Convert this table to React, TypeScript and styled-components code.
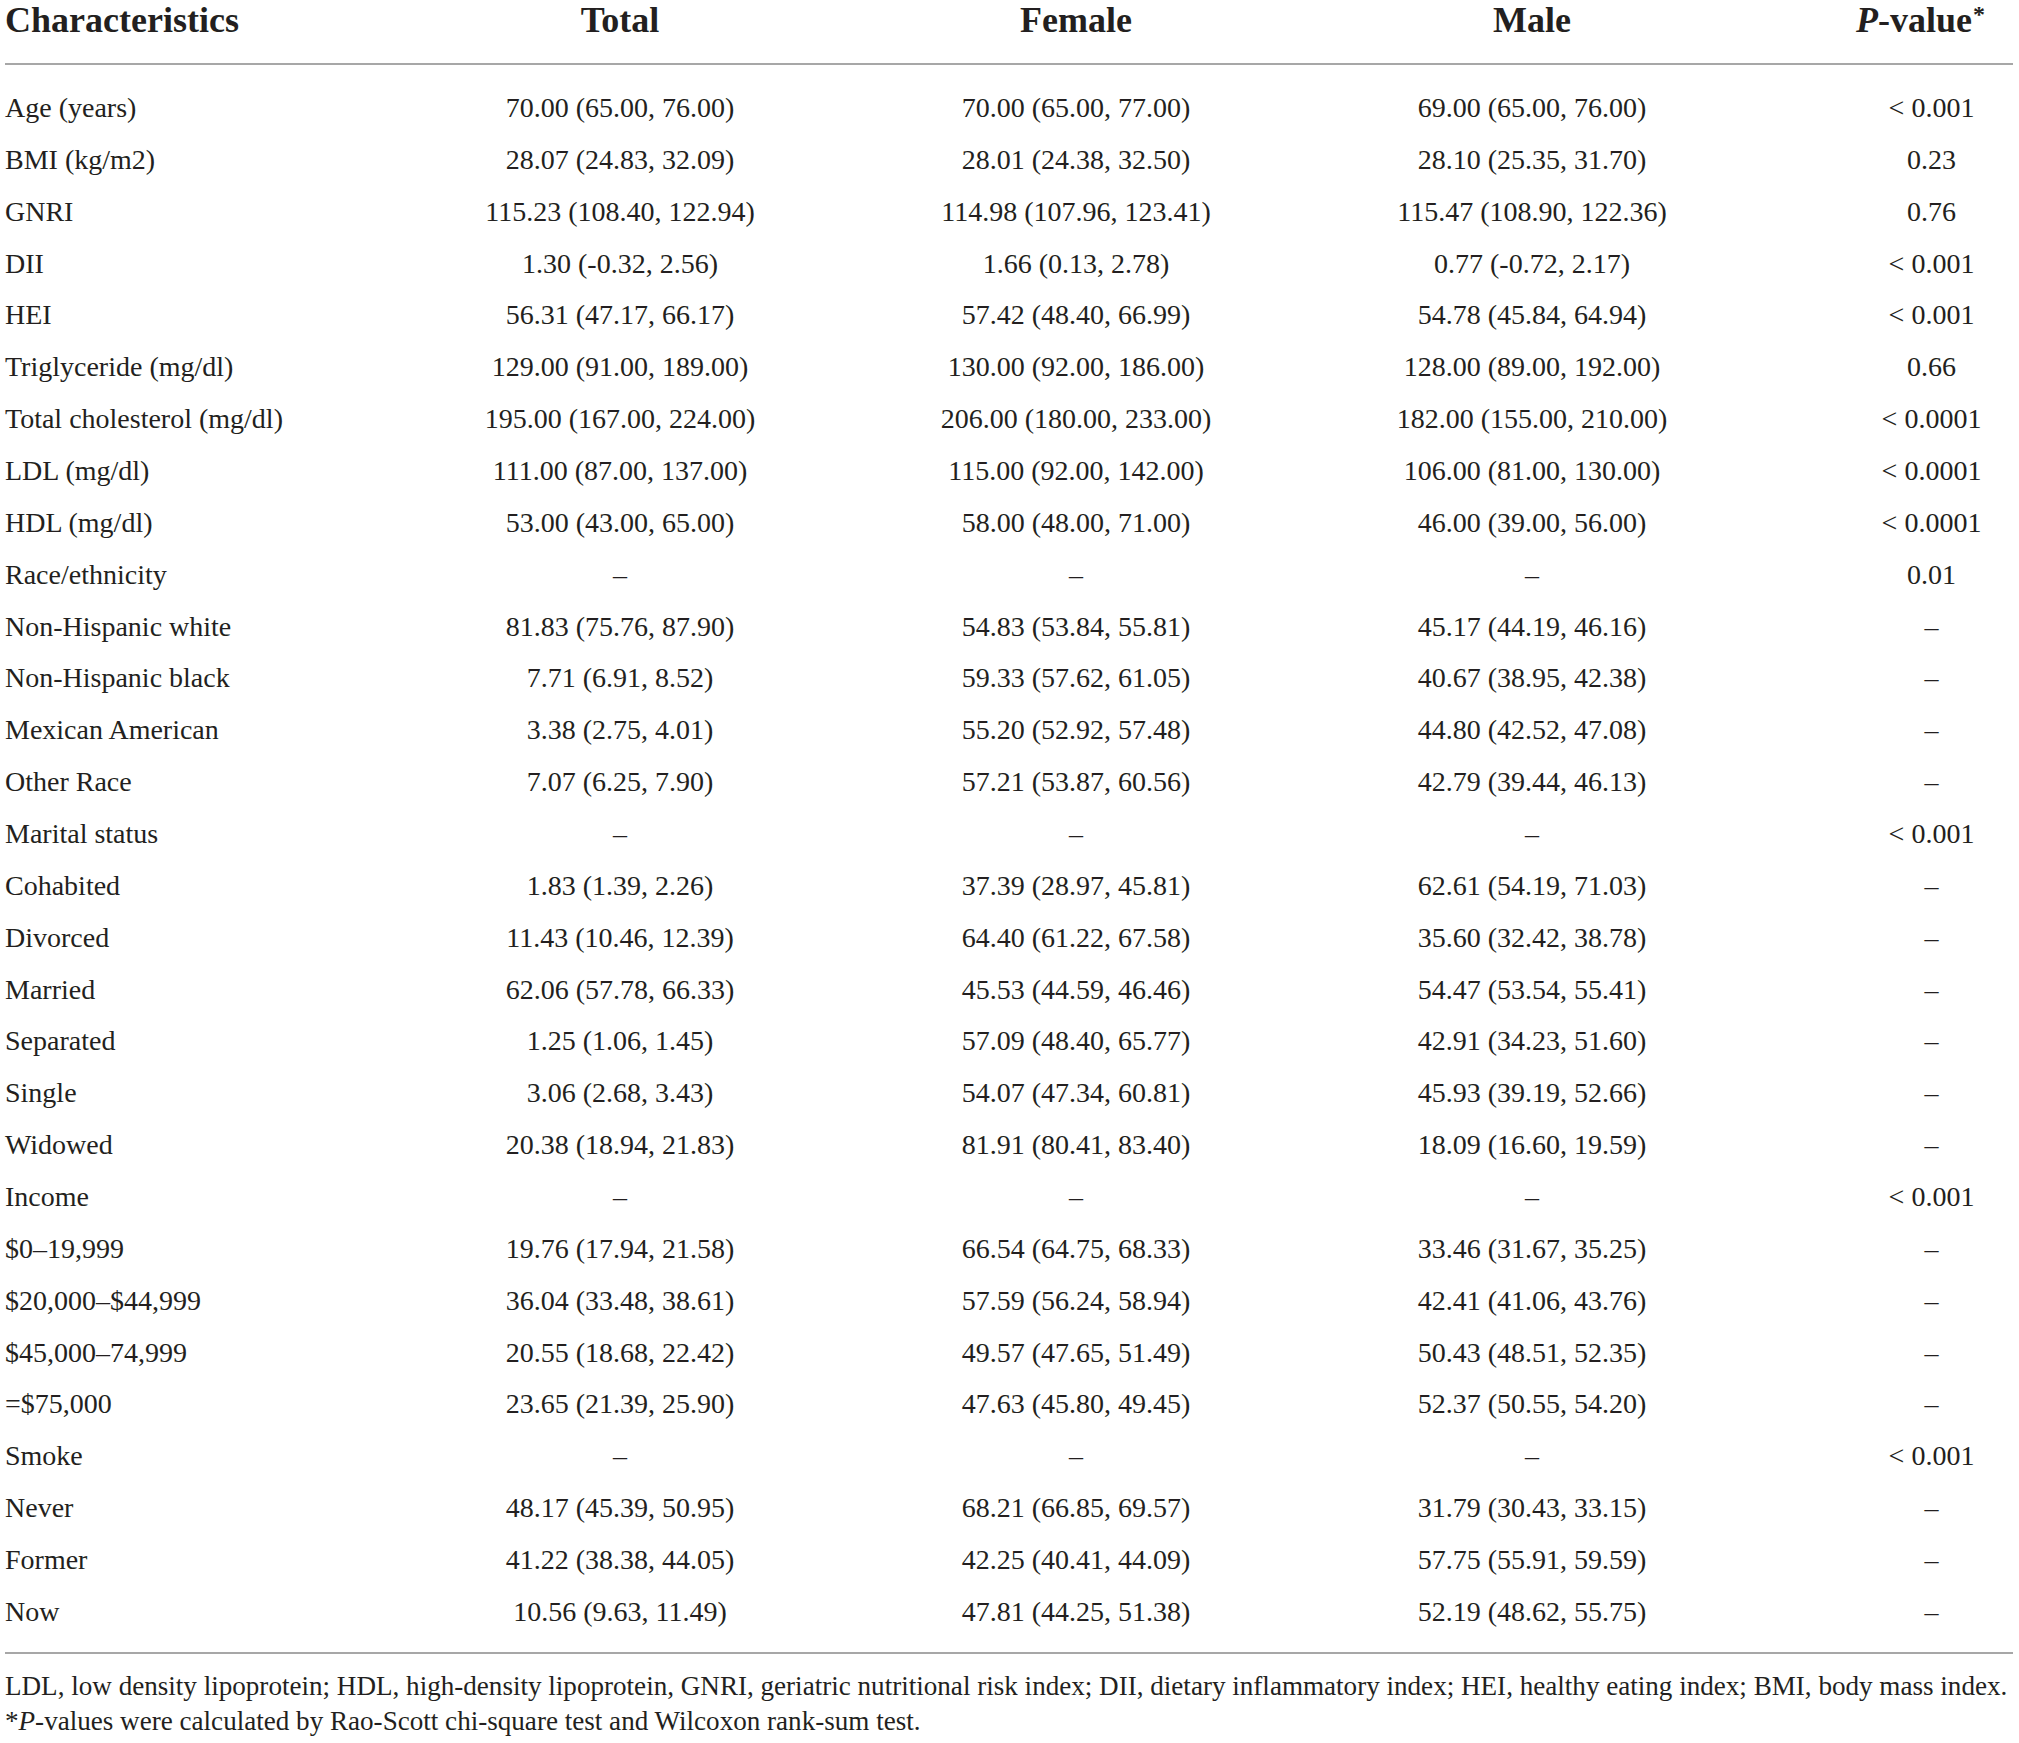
import React from "react";
import styled, { createGlobalStyle } from "styled-components";

const GlobalStyle = createGlobalStyle`
  html, body {
    margin: 0;
    padding: 0;
    background: #ffffff;
  }
  body {
    font-family: "Liberation Serif", "Times New Roman", serif;
    color: #231f20;
  }
`;

const Page = styled.div`
  width: 2019px;
  box-sizing: border-box;
  padding: 0 6px 0 5px;
`;

const Grid = styled.div`
  display: grid;
  grid-template-columns: 387px 456px 456px 456px 1fr;
`;

const HeadRow = styled(Grid)`
  padding: 2px 0 21px;
  border-bottom: 2px solid #a7a7a7;
`;

const HeadCell = styled.div<{ $left?: boolean; $pad?: number }>`
  font-size: 36px;
  line-height: 36px;
  font-weight: 700;
  white-space: nowrap;
  text-align: ${(p) => (p.$left ? "left" : "center")};
  padding-left: ${(p) => p.$pad ?? 0}px;
`;

const Body = styled.div`
  padding-top: 17px;
  padding-bottom: 14.6px;
  border-bottom: 2px solid #a7a7a7;
`;

const BodyRow = styled(Grid)`
  height: 51.86px;
`;

const Cell = styled.div<{ $left?: boolean; $pad?: number }>`
  font-size: 28px;
  line-height: 51.86px;
  white-space: nowrap;
  text-align: ${(p) => (p.$left ? "left" : "center")};
  padding-left: ${(p) => p.$pad ?? 0}px;
`;

const Notes = styled.div`
  padding-top: 14.4px;
  font-size: 27.1px;
  line-height: 35px;
  white-space: nowrap;
`;

const Sup = styled.sup`
  font-size: 24px;
  vertical-align: 0;
  position: relative;
  top: -10px;
  margin-left: 1px;
`;

type Row = [string, string, string, string, string];

const D = "–";

const rows: Row[] = [
  ["Age (years)", "70.00 (65.00, 76.00)", "70.00 (65.00, 77.00)", "69.00 (65.00, 76.00)", "< 0.001"],
  ["BMI (kg/m2)", "28.07 (24.83, 32.09)", "28.01 (24.38, 32.50)", "28.10 (25.35, 31.70)", "0.23"],
  ["GNRI", "115.23 (108.40, 122.94)", "114.98 (107.96, 123.41)", "115.47 (108.90, 122.36)", "0.76"],
  ["DII", "1.30 (-0.32, 2.56)", "1.66 (0.13, 2.78)", "0.77 (-0.72, 2.17)", "< 0.001"],
  ["HEI", "56.31 (47.17, 66.17)", "57.42 (48.40, 66.99)", "54.78 (45.84, 64.94)", "< 0.001"],
  ["Triglyceride (mg/dl)", "129.00 (91.00, 189.00)", "130.00 (92.00, 186.00)", "128.00 (89.00, 192.00)", "0.66"],
  ["Total cholesterol (mg/dl)", "195.00 (167.00, 224.00)", "206.00 (180.00, 233.00)", "182.00 (155.00, 210.00)", "< 0.0001"],
  ["LDL (mg/dl)", "111.00 (87.00, 137.00)", "115.00 (92.00, 142.00)", "106.00 (81.00, 130.00)", "< 0.0001"],
  ["HDL (mg/dl)", "53.00 (43.00, 65.00)", "58.00 (48.00, 71.00)", "46.00 (39.00, 56.00)", "< 0.0001"],
  ["Race/ethnicity", D, D, D, "0.01"],
  ["Non-Hispanic white", "81.83 (75.76, 87.90)", "54.83 (53.84, 55.81)", "45.17 (44.19, 46.16)", D],
  ["Non-Hispanic black", "7.71 (6.91, 8.52)", "59.33 (57.62, 61.05)", "40.67 (38.95, 42.38)", D],
  ["Mexican American", "3.38 (2.75, 4.01)", "55.20 (52.92, 57.48)", "44.80 (42.52, 47.08)", D],
  ["Other Race", "7.07 (6.25, 7.90)", "57.21 (53.87, 60.56)", "42.79 (39.44, 46.13)", D],
  ["Marital status", D, D, D, "< 0.001"],
  ["Cohabited", "1.83 (1.39, 2.26)", "37.39 (28.97, 45.81)", "62.61 (54.19, 71.03)", D],
  ["Divorced", "11.43 (10.46, 12.39)", "64.40 (61.22, 67.58)", "35.60 (32.42, 38.78)", D],
  ["Married", "62.06 (57.78, 66.33)", "45.53 (44.59, 46.46)", "54.47 (53.54, 55.41)", D],
  ["Separated", "1.25 (1.06, 1.45)", "57.09 (48.40, 65.77)", "42.91 (34.23, 51.60)", D],
  ["Single", "3.06 (2.68, 3.43)", "54.07 (47.34, 60.81)", "45.93 (39.19, 52.66)", D],
  ["Widowed", "20.38 (18.94, 21.83)", "81.91 (80.41, 83.40)", "18.09 (16.60, 19.59)", D],
  ["Income", D, D, D, "< 0.001"],
  ["$0–19,999", "19.76 (17.94, 21.58)", "66.54 (64.75, 68.33)", "33.46 (31.67, 35.25)", D],
  ["$20,000–$44,999", "36.04 (33.48, 38.61)", "57.59 (56.24, 58.94)", "42.41 (41.06, 43.76)", D],
  ["$45,000–74,999", "20.55 (18.68, 22.42)", "49.57 (47.65, 51.49)", "50.43 (48.51, 52.35)", D],
  ["=$75,000", "23.65 (21.39, 25.90)", "47.63 (45.80, 49.45)", "52.37 (50.55, 54.20)", D],
  ["Smoke", D, D, D, "< 0.001"],
  ["Never", "48.17 (45.39, 50.95)", "68.21 (66.85, 69.57)", "31.79 (30.43, 33.15)", D],
  ["Former", "41.22 (38.38, 44.05)", "42.25 (40.41, 44.09)", "57.75 (55.91, 59.59)", D],
  ["Now", "10.56 (9.63, 11.49)", "47.81 (44.25, 51.38)", "52.19 (48.62, 55.75)", D],
];

export default function App() {
  return (
    <>
      <GlobalStyle />
      <Page>
        <HeadRow>
          <HeadCell $left>Characteristics</HeadCell>
          <HeadCell>Total</HeadCell>
          <HeadCell>Female</HeadCell>
          <HeadCell>Male</HeadCell>
          <HeadCell $pad={68}>
            <i>P</i>-value<Sup>*</Sup>
          </HeadCell>
        </HeadRow>
        <Body>
          {rows.map((r) => (
            <BodyRow key={r[0]}>
              <Cell $left>{r[0]}</Cell>
              <Cell>{r[1]}</Cell>
              <Cell>{r[2]}</Cell>
              <Cell>{r[3]}</Cell>
              <Cell $pad={90}>{r[4]}</Cell>
            </BodyRow>
          ))}
        </Body>
        <Notes>
          <div>
            LDL, low density lipoprotein; HDL, high-density lipoprotein, GNRI, geriatric nutritional risk index; DII,
            dietary inflammatory index; HEI, healthy eating index; BMI, body mass index.
          </div>
          <div>
            *<i>P</i>-values were calculated by Rao-Scott chi-square test and Wilcoxon rank-sum test.
          </div>
        </Notes>
      </Page>
    </>
  );
}
